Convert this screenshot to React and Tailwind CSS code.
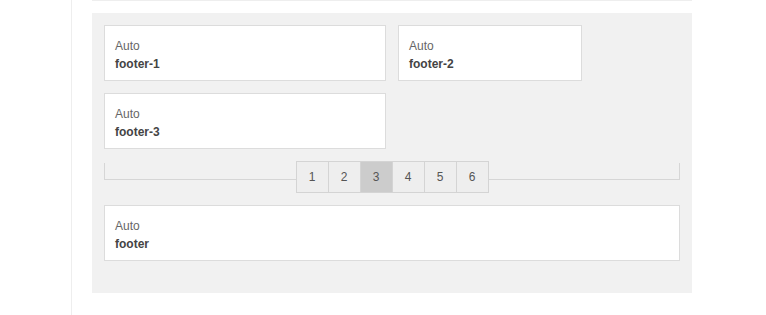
import React from 'react';

const cards = [
  { name: 'footer-1', width: 'w-[282px]' },
  { name: 'footer-2', width: 'w-[184px]' },
  { name: 'footer-3', width: 'w-[282px]' },
];

const Card = ({ name, className = '' }) => (
  <div className={`h-[56px] bg-white border border-[#dcdcdc] px-[10px] pt-[11px] ${className}`}>
    <div className="text-[12px] leading-[18px] text-[#666]">Auto</div>
    <div className="text-[12px] leading-[18px] font-bold text-[#444]">{name}</div>
  </div>
);

const App = () => {
  const pages = [1, 2, 3, 4, 5, 6];
  const current = 3;

  return (
    <div className="min-h-[315px] bg-white font-['Liberation_Sans',Arial,sans-serif]">
      <div className="ml-[71px] min-h-[315px] border-l border-[#eeeeee] pl-[20px]">
        <div className="w-[600px] border-b border-[#eeeeee] h-[1px]" />
        <div className="w-[600px] mt-[12px] bg-[#f1f1f1] p-[12px] pb-[32px]">
          {/* auto cards */}
          <div className="flex flex-wrap gap-[12px] w-[480px]">
            {cards.map((c) => (
              <Card key={c.name} name={c.name} className={c.width} />
            ))}
          </div>

          {/* pagination */}
          <div className="relative mt-[12px] h-[32px]">
            <div className="absolute left-0 right-0 top-[2px] h-[17px] border border-t-0 border-[#d6d6d6]" />
            <div className="relative flex justify-center">
              {pages.map((p, i) => (
                <button
                  key={p}
                  className={`w-[33px] h-[32px] border border-[#d4d4d4] text-[12px] text-[#555] ${
                    i > 0 ? '-ml-px' : ''
                  } ${p === current ? 'bg-[#cccccc] border-[#bdbdbd] relative z-10' : 'bg-[#eeeeee]'}`}
                >
                  {p}
                </button>
              ))}
            </div>
          </div>

          <Card name="footer" className="mt-[12px] w-full" />
        </div>
      </div>
    </div>
  );
};

export default App;
